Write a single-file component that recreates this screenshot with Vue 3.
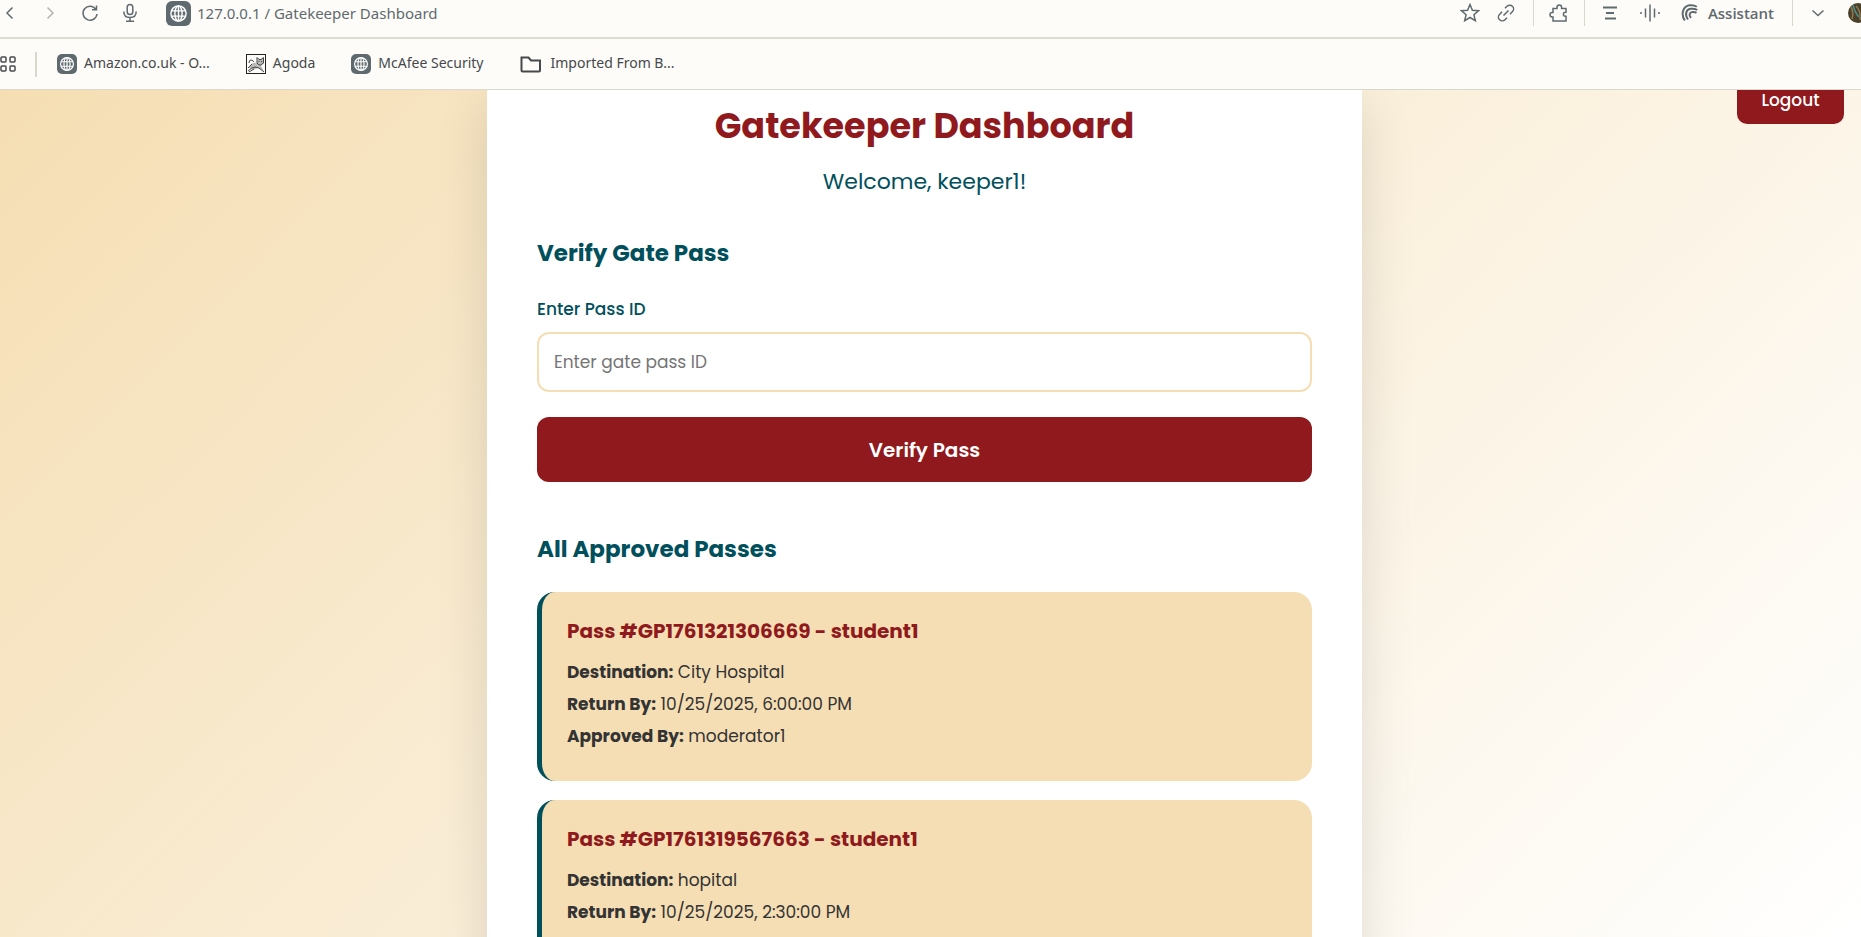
<script setup>
import { ref } from 'vue'

const passId = ref('')

const bookmarks = [
  { label: 'Amazon.co.uk - O...', icon: 'globe' },
  { label: 'Agoda', icon: 'sketch' },
  { label: 'McAfee Security', icon: 'globe' },
  { label: 'Imported From B...', icon: 'folder' },
]

const passes = [
  {
    id: 'GP1761321306669',
    student: 'student1',
    destination: 'City Hospital',
    returnBy: '10/25/2025, 6:00:00 PM',
    approvedBy: 'moderator1',
  },
  {
    id: 'GP1761319567663',
    student: 'student1',
    destination: 'hopital',
    returnBy: '10/25/2025, 2:30:00 PM',
    approvedBy: '',
  },
]
</script>

<template>
  <div class="window">
    <header class="toolbar">
      <nav class="nav" aria-label="Navigation">
        <button class="tool" aria-label="Back">
          <svg width="20" height="20" viewBox="0 0 20 20"><path d="M12.5 4.5 7 10l5.500 5.500" /></svg>
        </button>
        <button class="tool faded" aria-label="Forward">
          <svg width="20" height="20" viewBox="0 0 20 20"><path d="M7.500 4.500 13 10l-5.500 5.500" /></svg>
        </button>
        <button class="tool" aria-label="Reload">
          <svg width="20" height="20" viewBox="0 0 20 20"><path d="M15.800 6.200A7 7 0 1 0 17 11M16.500 2.500v4.300h-4.500" /></svg>
        </button>
        <button class="tool" aria-label="Voice search">
          <svg width="20" height="20" viewBox="0 0 20 20">
            <rect x="7.200" y="1.500" width="5.600" height="10" rx="2.800" />
            <path d="M3.800 8.500c0 4 2.700 6 6.200 6s6.200-2 6.200-6M10 14.500V18M6 18.200h8" />
          </svg>
        </button>
      </nav>
      <span class="badge badge-large">
        <svg width="19" height="19" viewBox="0 0 20 20">
          <circle cx="10" cy="10" r="8" /><ellipse cx="10" cy="10" rx="3.800" ry="8" />
          <path d="M10 2v16M2.500 7.200h15M2.500 12.800h15" />
        </svg>
      </span>
      <span class="address">127.0.0.1 / Gatekeeper Dashboard</span>
      <div class="tools">
        <button class="tool narrow" aria-label="Bookmark">
          <svg width="20" height="20" viewBox="0 0 20 20"><path d="m10 1.500 2.400 5.700 6.100.5-4.600 4 1.400 6-5.300-3.200-5.300 3.200 1.400-6-4.600-4 6.100-.5z" /></svg>
        </button>
        <button class="tool link" aria-label="Copy link">
          <svg width="20" height="20" viewBox="0 0 20 20">
            <path d="m9 5.300 2-2a3.700 3.700 0 0 1 5.500 5.300l-2.500 2.600M11 14.700l-2 2a3.700 3.700 0 0 1-5.500-5.300L6 8.800M7.500 12.500l5-5" />
          </svg>
        </button>
        <span class="rule"></span>
        <button class="tool" aria-label="Extensions">
          <svg width="20" height="20" viewBox="0 0 20 20">
            <path d="M4 5.500h4V4.300a2.300 2.300 0 0 1 4.600 0v1.200H17v3.700h-.6a2 2 0 0 0 0 4h.6V18H4v-4h-.8a2.200 2.200 0 0 1 0-4.400H4z" />
          </svg>
        </button>
        <span class="rule"></span>
        <button class="tool" aria-label="Reader">
          <svg width="20" height="20" viewBox="0 0 20 20"><path class="bold" d="M3 4.500h14M6 10h8M5 15.500h11" /></svg>
        </button>
        <button class="tool" aria-label="Read aloud">
          <svg width="20" height="20" viewBox="0 0 20 20"><path d="M1 9v2M5.500 5.500v9M10 1.500v17M14.500 5.500v9M19 9v2" /></svg>
        </button>
        <button class="assistant">
          <svg width="18" height="18" viewBox="0 0 18 18">
            <path class="heavy" d="M3.800 16.500C-.5 10 2 2.200 8.500 1.300c3-.4 5.500.2 7.300 1.500" />
            <path class="heavy" d="M7 15.500C3.500 10.500 5 5.500 9.500 4.800c3-.4 4.800 0 6.800 1.200" />
            <path class="heavy" d="M10 13.800C7.500 11 8.500 8.200 11.500 8c1.800-.1 3 .2 4 .8" />
          </svg>
          Assistant
        </button>
        <span class="rule"></span>
        <button class="tool" aria-label="More">
          <svg width="20" height="20" viewBox="0 0 20 20"><path d="m4.500 7.500 5.500 5 5.500-5" /></svg>
        </button>
        <button class="avatar" aria-label="Profile">
          <svg width="20" height="20" viewBox="0 0 20 20">
            <circle class="face" cx="10" cy="10" r="10" />
            <path class="tan" d="M3 4q3 5 1 12M8 3q5 5 4 14" /><path class="teal" d="M5 2q2 8 6 12" />
          </svg>
        </button>
      </div>
    </header>

    <nav class="bookmarks" aria-label="Bookmarks">
      <button class="apps" aria-label="Apps">
        <svg width="16" height="16" viewBox="0 0 16 16">
          <rect x="1" y="1" width="5" height="5" rx="1" /><rect x="10" y="1" width="5" height="5" rx="1" />
          <rect x="1" y="10" width="5" height="5" rx="1" /><rect x="10" y="10" width="5" height="5" rx="1" />
        </svg>
      </button>
      <span class="divider"></span>
      <a v-for="mark in bookmarks" :key="mark.label" class="mark" href="#">
        <span v-if="mark.icon === 'globe'" class="badge">
          <svg width="16" height="16" viewBox="0 0 20 20">
            <circle cx="10" cy="10" r="8" /><ellipse cx="10" cy="10" rx="3.800" ry="8" />
            <path d="M10 2v16M2.500 7.200h15M2.500 12.800h15" />
          </svg>
        </span>
        <svg v-else-if="mark.icon === 'sketch'" class="sketch" width="20" height="20" viewBox="0 0 20 20">
          <rect x=".5" y=".5" width="19" height="19" />
          <path class="fur" d="M3 14q2-6 8-5l1-5 2 1h2l2-1v5l-3 3 3 5-6-3-5 2z" />
          <path class="lines" d="M2 17q4-4 7-4l4 1 5 4M3 9q0-3 2-3t3 2M11 9V3.500l2 2h2l2.500-2V9l-3 2-2-.5zM13 7v1M15.500 7v1M2 14l4-4M3 18l5-3" />
        </svg>
        <svg v-else class="folder" width="22" height="20" viewBox="0 0 22 20">
          <path d="M1.500 3.500h7l2.500 3h9v10q0 1-1 1H2.500q-1 0-1-1z" />
        </svg>
        <span class="mark-label">{{ mark.label }}</span>
      </a>
    </nav>

    <main class="page">
      <button class="logout">Logout</button>
      <div class="card">
        <h1>Gatekeeper Dashboard</h1>
        <p class="welcome">Welcome, keeper1!</p>

        <section>
          <h2>Verify Gate Pass</h2>
          <form @submit.prevent>
            <label for="pass-id">Enter Pass ID</label>
            <input id="pass-id" v-model="passId" type="text" placeholder="Enter gate pass ID" />
            <button class="submit" type="submit">Verify Pass</button>
          </form>
        </section>

        <section>
          <h2>All Approved Passes</h2>
          <article v-for="pass in passes" :key="pass.id" class="pass">
            <h3>Pass #{{ pass.id }} - {{ pass.student }}</h3>
            <p><strong>Destination:</strong> {{ pass.destination }}</p>
            <p><strong>Return By:</strong> {{ pass.returnBy }}</p>
            <p v-if="pass.approvedBy"><strong>Approved By:</strong> {{ pass.approvedBy }}</p>
          </article>
        </section>
      </div>
    </main>
  </div>
</template>

<style>
body {
  margin: 0;
  overflow: hidden;
}
</style>

<style scoped>
* {
  box-sizing: border-box;
}

h1, h2, h3, p {
  margin: 0;
}

button {
  border: 0;
  padding: 0;
  background: none;
  font-family: inherit;
}

.window {
  display: flex;
  flex-direction: column;
  height: 100vh;
  overflow: hidden;
  font-family: Poppins, Inter, "Open Sans", sans-serif;
}

.toolbar,
.bookmarks {
  display: flex;
  flex: none;
  align-items: center;
  background: #fefcf8;
  color: #5f6a6f;
  font-family: "Noto Sans", "Open Sans", sans-serif;
}

.toolbar {
  height: 39px;
  padding-bottom: 11px;
  border-bottom: 2px solid #dcdcd0;
}

.toolbar svg,
.bookmarks svg {
  display: block;
  fill: none;
  stroke: currentColor;
  stroke-width: 1.5;
}

.nav {
  display: flex;
  margin-left: -10px;
}

.tool {
  display: flex;
  justify-content: center;
  width: 40px;
  color: #5f6a6f;
}

.faded {
  color: #b4b5b0;
}

.narrow,
.link {
  width: 36px;
}

.toolbar .bold,
.toolbar .heavy {
  stroke-width: 2;
}

.badge {
  display: flex;
  align-items: center;
  justify-content: center;
  width: 20px;
  height: 20px;
  border-radius: 5px;
  background: #5f6a6f;
  color: #fff;
}

.badge-large {
  width: 25px;
  height: 25px;
  margin: 0 6px 0 16px;
  border-radius: 6px;
}

.address {
  font-size: 15px;
}

.tools {
  display: flex;
  align-items: center;
  margin-right: -7px;
  margin-left: auto;
}

.rule {
  width: 1px;
  height: 26px;
  margin: 0 5px;
  background: #d8d8cc;
}

.link {
  margin-right: 4px;
}

.assistant {
  display: flex;
  align-items: center;
  gap: 9px;
  padding: 0 13px 0 11px;
  color: #5f6a6f;
  font-family: "Open Sans", "Noto Sans", sans-serif;
  font-size: 15px;
  font-weight: 600;
}

.avatar {
  margin-left: 10px;
}

.toolbar .face {
  fill: #4b402a;
  stroke: none;
}

.toolbar .tan {
  stroke: #8d7a52;
}

.toolbar .teal {
  stroke: #4f8f8c;
}

.bookmarks {
  height: 51px;
  border-bottom: 1px solid #d8d8cc;
  color: #45494b;
  font-size: 14px;
}

.apps {
  color: #45494b;
}

.divider {
  width: 2px;
  height: 25px;
  margin: 0 20px 0 19px;
  background: #d8d8cc;
}

.mark {
  display: flex;
  align-items: center;
  gap: 7px;
  margin-right: 36px;
  color: inherit;
  line-height: 20px;
  text-decoration: none;
  white-space: nowrap;
}

.mark-label {
  padding-bottom: 2px;
}

.bookmarks .sketch {
  stroke: #222;
  stroke-width: 1;
}

.bookmarks .lines {
  stroke: #444;
}

.bookmarks .fur {
  fill: #bbb;
  stroke: none;
}

.bookmarks .folder {
  margin-right: 2px;
  stroke-width: 2;
}

.page {
  position: relative;
  flex: 1;
  min-height: 0;
  padding-right: 12px;
  overflow: hidden;
  background: linear-gradient(135deg, #f5deb3, #fff);
  color: #333;
}

.logout {
  position: absolute;
  top: -14px;
  right: 17px;
  width: 107px;
  height: 48px;
  border-radius: 10px;
  background: #8f191c;
  color: #fff;
  font-size: 17px;
  font-weight: 500;
  line-height: 20px;
}

.card {
  max-width: 875px;
  margin: 0 auto;
  padding: 8px 50px 50px;
  background: #fff;
  box-shadow: 0 15px 50px rgb(0 0 0 / 12%);
}

h1 {
  color: #8f191c;
  font-size: 35px;
  line-height: 56px;
  text-align: center;
}

.welcome {
  margin: 10px 0 33px;
  color: #00505c;
  font-size: 22px;
  line-height: 36px;
  text-align: center;
}

h2 {
  margin-bottom: 23px;
  color: #00505c;
  font-size: 23px;
  line-height: 40px;
}

label {
  display: block;
  margin-bottom: 10px;
  color: #00505c;
  font-size: 17px;
  font-weight: 500;
  line-height: 26px;
}

input {
  display: block;
  width: 100%;
  height: 60px;
  padding: 0 15px;
  border: 2px solid #f5deb3;
  border-radius: 12px;
  background: #fff;
  font: inherit;
  font-size: 17px;
}

input::placeholder {
  color: #757575;
}

.submit {
  width: 100%;
  height: 65px;
  margin: 25px 0 47px;
  border-radius: 12px;
  background: #8f191c;
  color: #fff;
  font-size: 20px;
  font-weight: 600;
}

.pass {
  min-height: 189px;
  margin-bottom: 19px;
  padding: 23px 25px 29px;
  border-left: 5px solid #00505c;
  border-radius: 18px;
  background: #f5deb3;
}

h3 {
  margin-bottom: 9px;
  color: #8f191c;
  font-size: 20px;
  line-height: 32px;
}

.pass p {
  font-size: 17px;
  line-height: 32px;
}
</style>
